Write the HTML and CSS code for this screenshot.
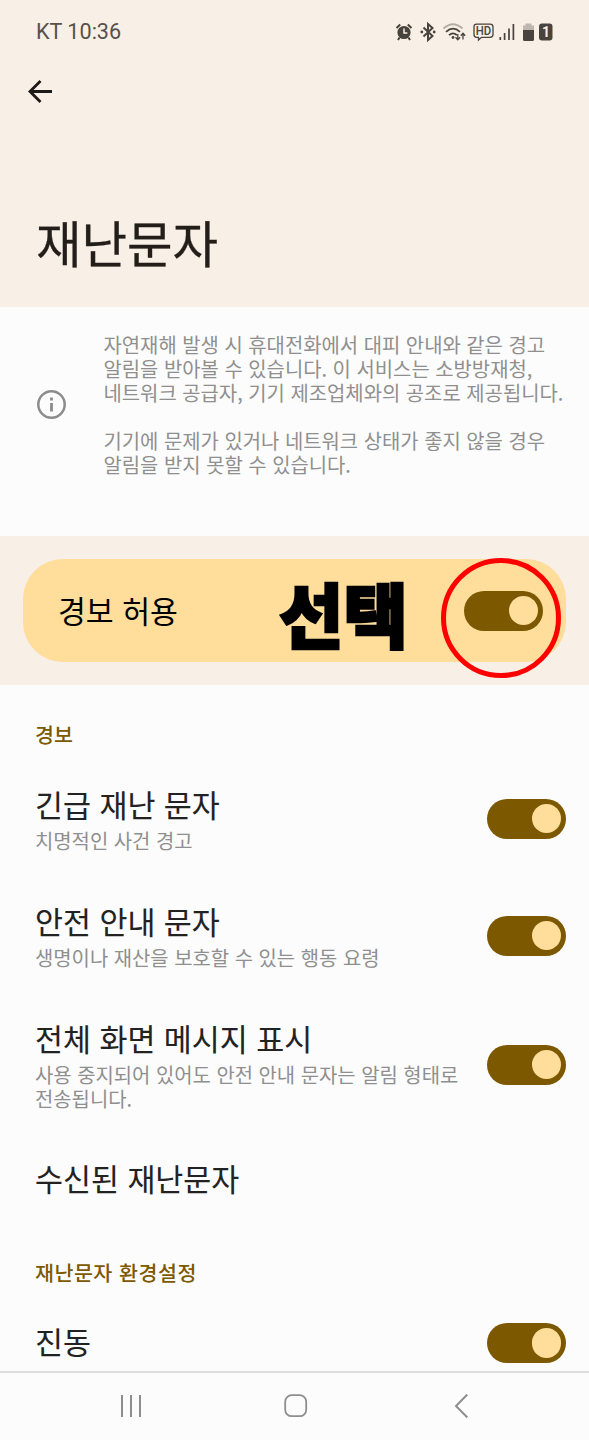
FILE: index.html
```
<!DOCTYPE html>
<html lang="ko">
<head>
    <meta charset="UTF-8">
    <meta name="viewport" content="width=device-width, initial-scale=1.0">
    <title>재난문자</title>
    <link rel="stylesheet" href="styles.css">
</head>
<body>
    <div class="screen">
        <!-- Header -->
        <header class="header">
            <div class="status-bar">
                <span class="carrier">KT 10:36</span>
                <svg class="status-icons" width="160" height="24" viewBox="0 0 160 24" fill="none" stroke="#49433e">
                    <!-- Alarm -->
                    <circle cx="9" cy="12.5" r="6.6" fill="#49433e" stroke="none"/>
                    <path d="M1.5 8L5.2 4.6M16.5 8L12.8 4.6M4.5 17.5L3 20M13.5 17.5L15 20" stroke-width="2"/>
                    <path d="M9 8.5V13H12.3" stroke="#f8efe6" stroke-width="1.5"/>
                    <!-- Bluetooth -->
                    <path d="M28.5 7.5L37.5 16L33 20V4L37.5 8L28.5 16.5" stroke-width="2"/>
                    <circle cx="26.8" cy="12" r="1.4" fill="#49433e" stroke="none"/>
                    <circle cx="39.2" cy="12" r="1.4" fill="#49433e" stroke="none"/>
                    <!-- Wifi -->
                    <path d="M48.5 8.5Q58 0 67.5 8.5" stroke="#b5aca5" stroke-width="1.8"/>
                    <path d="M51 11.8Q58 5.5 65 11.8M54 15.2Q58 11.5 62 15.2" stroke-width="1.8"/>
                    <circle cx="58" cy="17.5" r="1.4" fill="#49433e" stroke="none"/>
                    <path d="M62.8 14V19.5M60.5 17.3L62.8 19.7L65.1 17.3M68 19.5V13.5M65.8 15.7L68 13.3L70.2 15.7" stroke-width="1.3"/>
                    <!-- HD call -->
                    <path d="M81.5 4.2H95Q98 4.2 98 7V14.5Q98 17.3 95 17.3H86.5L83.5 20V17.3H81.5Q79 17.3 79 14.5V7Q79 4.2 81.5 4.2Z" stroke-width="1.3"/>
                    <text x="80.8" y="15.4" textLength="15.5" lengthAdjust="spacingAndGlyphs" class="hd-text">HD</text>
                    <!-- Signal -->
                    <path d="M105.3 20V17M109.6 20V13M114 20V8.5M118.4 20V4" stroke-width="1.7"/>
                    <!-- Battery -->
                    <path d="M130.5 3.5H136.5V5.5H139V10H128V5.5H130.5Z" fill="#bfb6af" stroke="none"/>
                    <path d="M128 10H139V19.5Q139 21 137.5 21H129.500Q128 21 128 19.5Z" fill="#49433e" stroke="none"/>
                    <rect x="144" y="3.5" width="13.5" height="17" rx="3" fill="#49433e" stroke="none"/>
                    <text x="146.9" y="17" class="sim-text">1</text>
                </svg>
            </div>
            <svg class="back" width="26" height="26" viewBox="0 0 26 26" fill="none" stroke="#1d1a17" stroke-width="2.8">
                <path d="M25 13.5H3M13.5 3L3 13.5L13.5 24"/>
            </svg>
            <h1>재난문자</h1>
        </header>

        <section class="info">
            <svg class="info-icon" width="30" height="30" viewBox="0 0 30 30" fill="none" stroke="#8c8c8c">
                <circle cx="14.5" cy="14.5" r="13.2" stroke-width="2.5"/>
                <path d="M14.5 13V21.5M14.5 7.5V10.5" stroke-width="2.8"/>
            </svg>
            <div class="info-text">
                <p>자연재해 발생 시 휴대전화에서 대피 안내와 같은 경고<br>알림을 받아볼 수 있습니다. 이 서비스는 소방방재청,<br>네트워크 공급자, 기기 제조업체와의 공조로 제공됩니다.</p>
                <p>기기에 문제가 있거나 네트워크 상태가 좋지 않을 경우<br>알림을 받지 못할 수 있습니다.</p>
            </div>
        </section>

        <!-- Main switch -->
        <section class="allow">
            <div class="allow-card">
                <span class="allow-label">경보 허용</span>
                <span class="switch"></span>
                <span class="mark-text">선택</span>
                <span class="mark-circle"></span>
            </div>
        </section>

        <main class="list">
            <h2>경보</h2>
            <div class="row">
                <div class="row-text">
                    <h3>긴급 재난 문자</h3>
                    <p>치명적인 사건 경고</p>
                </div>
                <span class="switch"></span>
            </div>
            <div class="row">
                <div class="row-text">
                    <h3>안전 안내 문자</h3>
                    <p>생명이나 재산을 보호할 수 있는 행동 요령</p>
                </div>
                <span class="switch"></span>
            </div>
            <div class="row">
                <div class="row-text">
                    <h3>전체 화면 메시지 표시</h3>
                    <p>사용 중지되어 있어도 안전 안내 문자는 알림 형태로<br>전송됩니다.</p>
                </div>
                <span class="switch"></span>
            </div>
            <div class="row row-single">
                <h3>수신된 재난문자</h3>
            </div>
            <h2 class="second">재난문자 환경설정</h2>
            <div class="row row-single">
                <h3>진동</h3>
                <span class="switch"></span>
            </div>
        </main>

        <!-- Navigation bar -->
        <nav class="navbar">
            <svg width="24" height="24" viewBox="0 0 24 24" fill="none" stroke="#8e8e8e" stroke-width="2">
                <path d="M3 1V23M12 1V23M21 1V23"/>
            </svg>
            <svg width="24" height="24" viewBox="0 0 24 24" fill="none" stroke="#8e8e8e" stroke-width="1.8">
                <rect x="1.2" y="1.2" width="21" height="21" rx="6.5"/>
            </svg>
            <svg width="24" height="24" viewBox="0 0 24 24" fill="none" stroke="#8e8e8e" stroke-width="2">
                <path d="M19.3 0.5L8 12L19.3 23.5"/>
            </svg>
        </nav>
    </div>
</body>
</html>
```
FILE: styles.css
```
* {
    box-sizing: border-box;
    margin: 0;
    padding: 0;
}

body {
    font-family: "Noto Sans CJK KR", sans-serif;
    background-color: #fcfcfc;
}

.screen {
    display: flex;
    flex-direction: column;
    width: 589px;
    height: 1440px;
    overflow: hidden;
}

/* Header */
.header {
    height: 307px;
    flex-shrink: 0;
    padding: 20px 34px 0 36px;
    background-color: #f8efe6;
}

.status-bar {
    display: flex;
    justify-content: space-between;
    align-items: center;
    height: 24px;
}

.carrier {
    font-family: Roboto, sans-serif;
    font-size: 21.6px;
    line-height: 24px;
    color: #57514c;
}

.hd-text {
    font: 500 13px Roboto, sans-serif;
    fill: #49433e;
    stroke: none;
}

.sim-text {
    font: bold 14px Roboto, sans-serif;
    fill: #f8efe6;
    stroke: none;
}

.back {
    display: block;
    margin: 34px 0 0 -9px;
}

h1 {
    margin-top: 101px;
    font-size: 49.5px;
    font-weight: 400;
    line-height: 74px;
    color: #231e1a;
    -webkit-text-stroke: 0.3px #231e1a;
}

/* Description */
.info {
    display: flex;
    height: 229px;
    flex-shrink: 0;
    padding: 26px 0 0 37px;
}

.info-icon {
    margin: 57px 36.5px 0 0;
}

.info-text {
    font-size: 19.9px;
    line-height: 24px;
    color: #8f8f8f;
    white-space: nowrap;
}

.info-text p + p {
    margin-top: 24px;
}

/* Main switch */
.allow {
    height: 149px;
    flex-shrink: 0;
    padding: 23px;
    background-color: #f8efe6;
}

.allow-card {
    position: relative;
    display: flex;
    justify-content: space-between;
    align-items: center;
    height: 103px;
    padding: 0 23px 0 35px;
    border-radius: 40px;
    background-color: #ffdd9b;
}

.allow-label {
    margin-bottom: 1px;
    font-size: 30.3px;
    color: #000;
}

.switch {
    display: flex;
    justify-content: flex-end;
    align-items: center;
    width: 79.5px;
    height: 40px;
    flex-shrink: 0;
    padding-right: 5px;
    border-radius: 20px;
    background-color: #7c5900;
}

.switch::after {
    content: "";
    width: 29.5px;
    height: 29.5px;
    border-radius: 50%;
    background-color: #ffdd9b;
}

/* Marks over the card */
.mark-text {
    position: absolute;
    left: 256px;
    top: 3px;
    font-size: 70px;
    font-weight: 900;
    line-height: 102px;
    color: #000;
    -webkit-text-stroke: 2.5px #000;
}

.mark-circle {
    position: absolute;
    left: 418px;
    top: -1px;
    width: 120px;
    height: 120px;
    border: 5px solid #f00;
    border-radius: 50%;
}

/* Settings list */
.list {
    flex: 1;
    min-height: 0;
    overflow: hidden;
    padding: 0 23px 0 35px;
}

h2 {
    height: 75px;
    padding-top: 34px;
    font-size: 20.6px;
    font-weight: 500;
    line-height: 30px;
    color: #7c5900;
}

h2.second {
    height: 73px;
    padding-top: 32px;
    letter-spacing: 0.5px;
}

.row {
    display: flex;
    justify-content: space-between;
    align-items: center;
    padding: 24px 0;
}

.row-single {
    height: 90px;
    padding: 0;
}

h3 {
    padding-bottom: 5px;
    font-size: 30.4px;
    font-weight: 400;
    line-height: 40px;
    color: #222;
    -webkit-text-stroke: 0.1px #222;
}

.row-single h3 {
    padding-bottom: 4px;
}

.row p {
    font-size: 19.9px;
    line-height: 24px;
    color: #8f8f8f;
    white-space: nowrap;
}

/* Navigation bar */
.navbar {
    display: flex;
    justify-content: space-between;
    height: 69px;
    flex-shrink: 0;
    padding: 21px 117px 0 119px;
    border-top: 2px solid #dededc;
}
```
